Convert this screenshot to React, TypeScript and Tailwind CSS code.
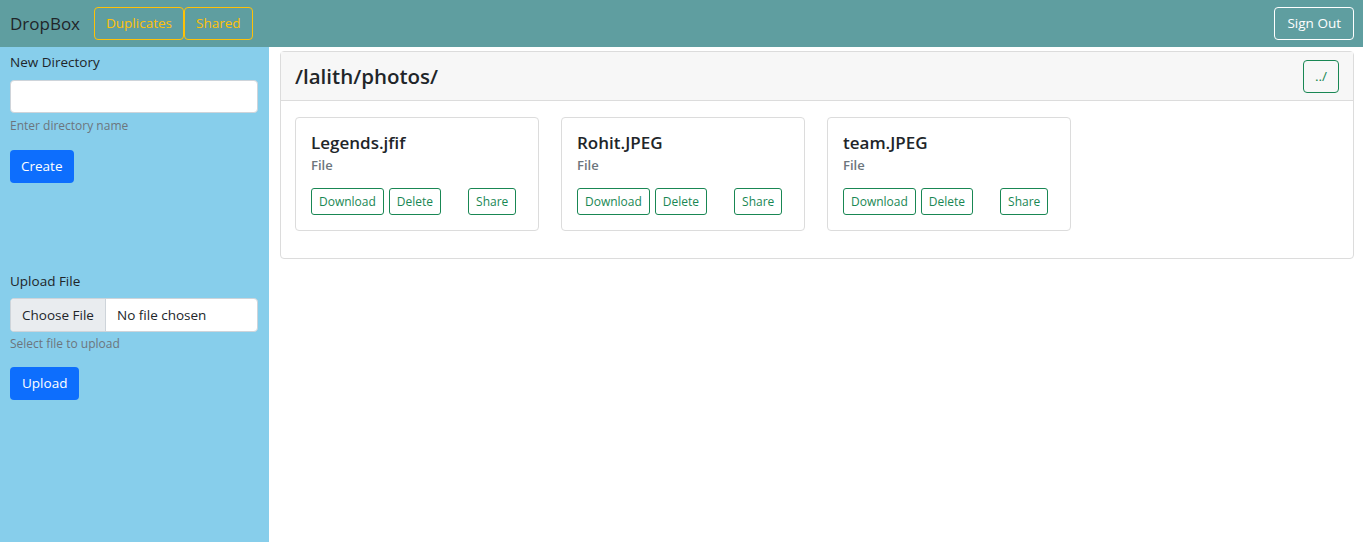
import React from "react";

const files = ["Legends.jfif", "Rohit.JPEG", "team.JPEG"];

function FileCard({ name }: { name: string }) {
  return (
    <div className="w-[244px] h-[114px] border border-[#dcdcdc] rounded-[4px] bg-white px-[15px] pt-[14px] mr-[22px]">
      <div className="text-[17px] leading-[21px] font-semibold text-[#212529]">{name}</div>
      <div className="text-[13px] leading-[17px] font-semibold text-[#6c757d] mt-[4px]">File</div>
      <div className="flex mt-[14px]">
        <button className="h-[27px] px-[7px] border border-[#198754] text-[#198754] rounded-[3px] text-[12px] leading-none">Download</button>
        <button className="h-[27px] px-[7px] ml-[5px] border border-[#198754] text-[#198754] rounded-[3px] text-[12px] leading-none">Delete</button>
        <button className="h-[27px] px-[7px] ml-[27px] border border-[#198754] text-[#198754] rounded-[3px] text-[12px] leading-none">Share</button>
      </div>
    </div>
  );
}

export default function App() {
  return (
    <div className="w-[1363px] h-[542px] flex flex-col overflow-hidden text-[13.5px] text-[#212529]" style={{ fontFamily: '"Open Sans", "Noto Sans", sans-serif' }}>
      <nav className="h-[47px] shrink-0 bg-[#5f9ea0] flex items-center pl-[10px] pr-[9px]">
        <span className="text-[17px] text-[#212529] mr-[14px]">DropBox</span>
        <button className="h-[33px] px-[11px] border border-[#ffc107] text-[#ffc107] rounded-[4px] text-[13.5px]">Duplicates</button>
        <button className="h-[33px] px-[11px] border border-[#ffc107] text-[#ffc107] rounded-[4px] text-[13.5px]">Shared</button>
        <div className="flex-1" />
        <button className="h-[33px] px-[12px] border border-white text-white rounded-[4px] text-[13.5px]">Sign Out</button>
      </nav>
      <div className="flex flex-1 min-h-0">
        <aside className="w-[269px] shrink-0 bg-[#87ceeb] px-[10px] pt-[5px]">
          <div className="text-[13.5px] leading-[21px] mb-[7px]">New Directory</div>
          <div className="h-[33px] w-[248px] bg-white border border-[#ced4da] rounded-[4px]" />
          <div className="text-[12px] text-[#6c757d] mt-[4px] leading-[18px]">Enter directory name</div>
          <button className="mt-[15px] h-[33px] px-[11px] bg-[#0d6efd] text-white rounded-[4px] text-[13.5px]">Create</button>
          <div className="h-[88px]" />
          <div className="text-[13.5px] leading-[21px] mb-[6px]">Upload File</div>
          <div className="h-[34px] w-[248px] bg-white border border-[#ced4da] rounded-[4px] flex overflow-hidden">
            <div className="w-[95px] bg-[#e9ecef] border-r border-[#ced4da] flex items-center pl-[11px] text-[13.5px]">Choose File</div>
            <div className="flex items-center pl-[11px] text-[13.5px]">No file chosen</div>
          </div>
          <div className="text-[12px] text-[#6c757d] mt-[3px] leading-[18px]">Select file to upload</div>
          <button className="mt-[14px] h-[33px] px-[12px] bg-[#0d6efd] text-white rounded-[4px] text-[13.5px]">Upload</button>
        </aside>
        <main className="flex-1 pl-[11px] pr-[9px] pt-[4px]">
          <div className="border border-[#dcdcdc] rounded-[4px] h-[208px]">
            <div className="h-[49px] bg-[#f7f7f7] border-b border-[#dcdcdc] flex items-center pl-[14px] pr-[14px]">
              <span className="text-[20.5px] font-semibold">/lalith/photos/</span>
              <div className="flex-1" />
              <button className="h-[33px] w-[36px] border border-[#198754] text-[#198754] rounded-[4px] text-[13.5px]">../</button>
            </div>
            <div className="flex px-[14px] pt-[16px]">
              {files.map((f) => (
                <FileCard key={f} name={f} />
              ))}
            </div>
          </div>
        </main>
      </div>
    </div>
  );
}
